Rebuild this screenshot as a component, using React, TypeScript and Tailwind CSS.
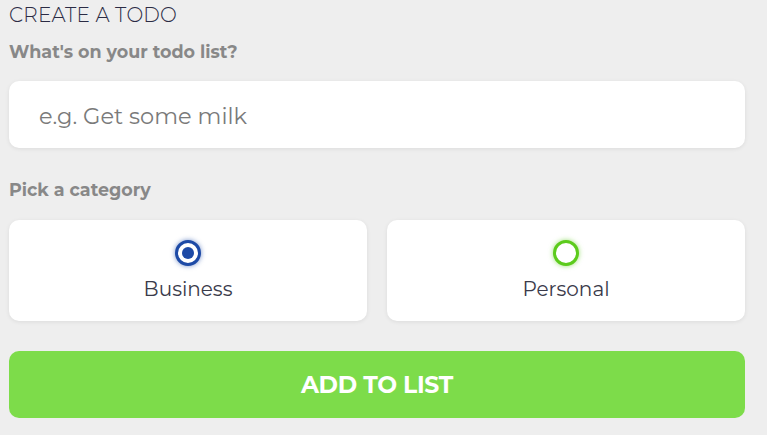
import { useState } from "react"

type Category = "business" | "personal"

function CategoryCard({
  label,
  value,
  selected,
  onSelect,
}: {
  label: string
  value: Category
  selected: boolean
  onSelect: (v: Category) => void
}) {
  const isBusiness = value === "business"
  return (
    <label
      onClick={() => onSelect(value)}
      className="flex flex-col items-center rounded-[10px] bg-white pt-[20px] h-[101px] shadow-[0_1px_4px_rgba(0,0,0,0.08)] cursor-pointer"
    >
      {isBusiness ? (
        <span className="flex items-center justify-center w-[26px] h-[26px] rounded-full border-[3px] border-[#1d4aa6] bg-white shadow-[0_0_5px_rgba(29,74,166,0.6)]">
          {selected && <span className="w-[12px] h-[12px] rounded-full bg-[#1d4aa6]" />}
        </span>
      ) : (
        <span className="flex items-center justify-center w-[26px] h-[26px] rounded-full border-[3px] border-[#5ccb1c] bg-white shadow-[0_0_5px_rgba(92,203,28,0.6)]">
          {selected && <span className="w-[12px] h-[12px] rounded-full bg-[#5ccb1c]" />}
        </span>
      )}
      <span className="mt-[11px] text-[20px] leading-[24px] text-[#3a3a4a]">{label}</span>
    </label>
  )
}

export default function App() {
  const [category, setCategory] = useState<Category>("business")
  const [todo, setTodo] = useState("")

  return (
    <div className="min-h-[435px] bg-[#eeeeee] font-['Montserrat','Open_Sans',sans-serif]">
      <div className="w-[736px] pl-[9px] pt-[3px] box-content">
        <h2 className="text-[20px] leading-[24px] font-light text-[#2b2b44] tracking-[0.2px]">CREATE A TODO</h2>
        <h4 className="mt-[15px] text-[17.5px] leading-[20px] font-bold text-[#888888]">What's on your todo list?</h4>
        <input
          type="text"
          value={todo}
          onChange={(e) => setTodo(e.target.value)}
          placeholder="e.g. Get some milk"
          className="mt-[19px] block w-full h-[67px] rounded-[10px] bg-white px-[30px] pt-[2px] text-[22.5px] text-[#333] placeholder:text-[#7a7a7a] outline-none shadow-[0_1px_4px_rgba(0,0,0,0.08)]"
        />
        <h4 className="mt-[32px] text-[17.5px] leading-[20px] font-bold text-[#888888]">Pick a category</h4>
        <div className="mt-[20px] grid grid-cols-2 gap-[20px]">
          <CategoryCard label="Business" value="business" selected={category === "business"} onSelect={setCategory} />
          <CategoryCard label="Personal" value="personal" selected={category === "personal"} onSelect={setCategory} />
        </div>
        <button className="mt-[30px] block w-full h-[67px] rounded-[10px] bg-[#7ddc4a] text-white text-[23.5px] font-bold tracking-[-0.3px]">
          ADD TO LIST
        </button>
      </div>
    </div>
  )
}
